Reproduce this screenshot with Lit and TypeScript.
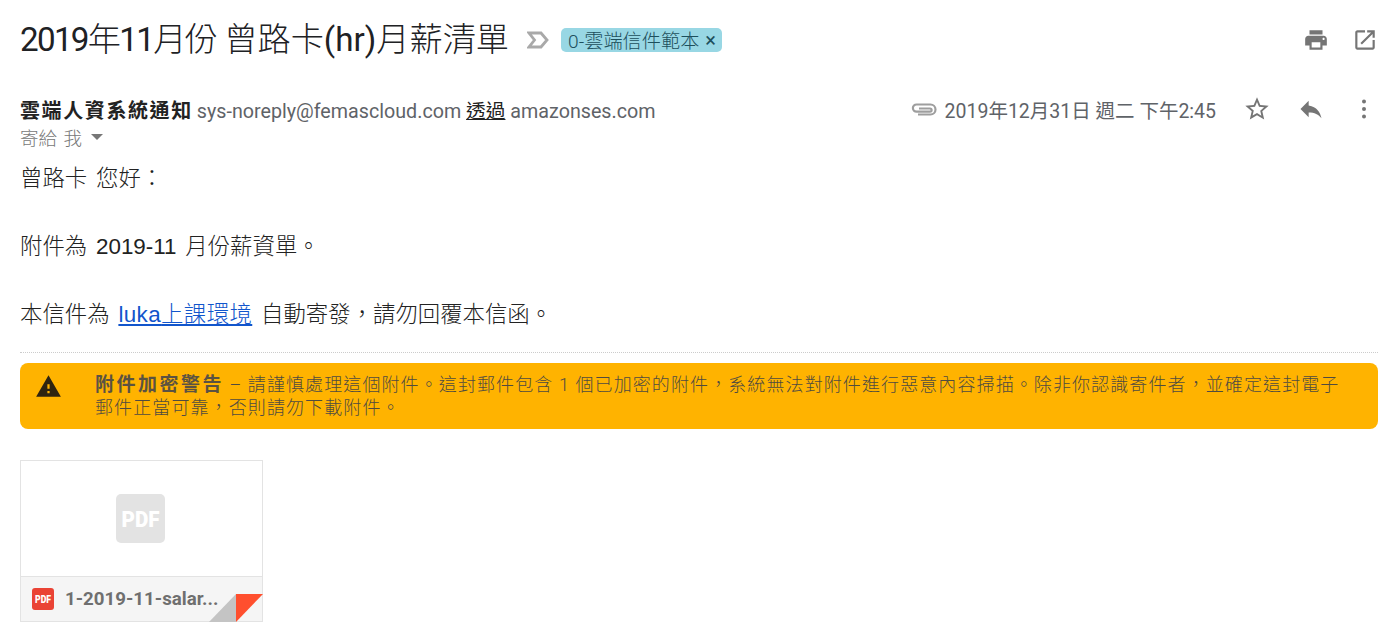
import { LitElement, html, css } from "lit";
import { customElement } from "lit/decorators.js";

@customElement("app-root")
export class AppRoot extends LitElement {
  static styles = css`
    :host {
      display: block;
      width: 1391px;
      height: 640px;
      overflow: hidden;
      background: #fff;
      font-family: Roboto, "Noto Sans CJK TC", sans-serif;
      color: #222;
      box-sizing: border-box;
      padding: 0 13px 0 20px;
    }
    svg { display: block; flex: none; }
    .lat { font-weight: 400; }
    .subject {
      display: flex;
      align-items: center;
      height: 80px;
    }
    .title { font-size: 33.2px; line-height: 40px; color: #202124; white-space: nowrap; font-weight: 300; }
    .title .tight { letter-spacing: -1.7px; }
    .imp { margin-left: 18px; }
    .tag {
      margin-left: 12px;
      display: flex;
      align-items: center;
      height: 24px;
      padding: 0 6px 0 7px;
      border-radius: 5px;
      background: #98d7e4;
      color: #1d4f5c;
      font-size: 19.2px;
      font-weight: 300;
      white-space: nowrap;
    }
    .tag .x { margin-left: 6px; font-size: 20px; line-height: 24px; font-weight: 400; }
    .grow { flex: 1; }
    .top-actions { display: flex; gap: 23px; align-items: center; }
    .from {
      display: flex;
      align-items: center;
      height: 34px;
      margin-top: 12px;
      white-space: nowrap;
    }
    .sender { font-size: 20px; font-weight: 700; color: #222; letter-spacing: 1.6px; }
    .addr { font-size: 19.7px; color: #5f6368; margin-left: 4px; }
    .addr u { color: #222; }
    .meta { display: flex; align-items: center; }
    .date { font-size: 19.5px; color: #5f6368; margin-left: 8px; }
    .msg-actions { display: flex; align-items: center; gap: 26.5px; margin-left: 26.5px; margin-right: 12px; }
    .dots { margin-left: 10.5px; }
    .to {
      display: flex;
      align-items: center;
      height: 20px;
      font-size: 18.5px;
      color: #777;
      white-space: nowrap;
      margin-top: 1px;
      font-weight: 300;
      word-spacing: 2px;
    }
    .caret {
      margin-left: 9px;
      width: 0;
      height: 0;
      border-left: 6px solid transparent;
      border-right: 6px solid transparent;
      border-top: 6px solid #777;
    }
    .body {
      margin-top: 15px;
      font-family: "Liberation Sans", "Noto Sans CJK TC", sans-serif;
      font-size: 22.4px;
      line-height: 34px;
      color: #222;
      font-weight: 300;
      word-spacing: 2.6px;
    }
    .body p { margin: 0; min-height: 34px; }
    .body a { color: #1155cc; text-decoration: underline; letter-spacing: 0.4px; }
    .rule {
      margin-top: 20px;
      border-top: 1px dotted #ccc;
    }
    .warn {
      margin-top: 10px;
      height: 66px;
      box-sizing: border-box;
      background: #ffb300;
      border-radius: 8px;
      display: flex;
      padding: 10px 30px 0 15px;
      color: #4f4b40;
      font-size: 18px;
      line-height: 23px;
    }
    .warn .ico { margin-right: 33px; }
    .warn b { font-size: 19px; color: #5b5242; letter-spacing: 2.5px; font-weight: 700; }
    .warn .txt { letter-spacing: 1.1px; font-weight: 300; }
    .att {
      margin-top: 31px;
      width: 243px;
      height: 162px;
      box-sizing: border-box;
      border: 1px solid #e3e3e3;
      position: relative;
      display: flex;
      flex-direction: column;
    }
    .preview {
      flex: 1;
      display: flex;
      align-items: center;
      justify-content: center;
      padding-right: 2px;
    }
    .bar {
      height: 45px;
      flex: none;
      box-sizing: border-box;
      background: #f5f5f5;
      border-top: 1px solid #e3e3e3;
      display: flex;
      align-items: center;
      padding: 0 0 0 11px;
    }
    .fname {
      margin-left: 11px;
      font-size: 18.7px;
      font-weight: 700;
      color: #6f6f6f;
      white-space: nowrap;
    }
    .fold { position: absolute; right: -1px; bottom: -1px; }
  `;

  render() {
    return html`
      <div class="subject">
        <div class="title"><span class="tight"><span class="lat">2019</span>年<span class="lat">11</span>月份</span> 曾路卡<span class="lat">(hr)</span>月薪清單</div>
        <svg class="imp" width="22" height="18" viewBox="0 0 22 18">
          <path d="M2 2h12l6 7-6 7H2l5.500-7z" fill="none" stroke="#a9a9a9" stroke-width="2.800"/>
        </svg>
        <div class="tag">0-雲端信件範本<span class="x">×</span></div>
        <div class="grow"></div>
        <div class="top-actions">
          <svg width="26" height="26" viewBox="0 0 24 24" fill="#757575"><path d="M19 8H5c-1.660 0-3 1.340-3 3v6h4v4h12v-4h4v-6c0-1.660-1.340-3-3-3zm-3 11H8v-5h8v5zm3-7c-.55 0-1-.45-1-1s.45-1 1-1 1 .45 1 1-.45 1-1 1zm-1-9H6v4h12V3z"/></svg>
          <svg width="26" height="26" viewBox="0 0 24 24" fill="#757575"><path d="M19 19H5V5h7V3H5c-1.110 0-2 .9-2 2v14c0 1.100.89 2 2 2h14c1.100 0 2-.9 2-2v-7h-2v7zM14 3v2h3.590l-9.830 9.830 1.410 1.410L19 6.410V10h2V3h-7z"/></svg>
        </div>
      </div>
      <div class="from">
        <span class="sender">雲端人資系統通知</span>
        <span class="addr">sys-noreply@femascloud.com <u>透過</u> amazonses.com</span>
        <div class="grow"></div>
        <div class="meta">
          <svg width="26" height="14" viewBox="0 0 26 14"><path d="M7 12.500h12.500a5 5 0 0 0 0-10H5.500a3.600 3.600 0 0 0 0 7.200H19a1.600 1.600 0 0 0 0-3.200H8" fill="none" stroke="#9e9e9e" stroke-width="2.200"/></svg>
          <span class="date">2019年12月31日 週二 下午2:45</span>
        </div>
        <div class="msg-actions">
          <svg width="28" height="28" viewBox="0 0 24 24" fill="#757575"><path d="M22 9.240l-7.190-.62L12 2 9.190 8.630 2 9.240l5.460 4.730L5.820 21 12 17.270 18.180 21l-1.630-7.030L22 9.240zM12 15.400l-3.760 2.270 1-4.280-3.320-2.880 4.380-.38L12 6.100l1.710 4.040 4.380.38-3.320 2.880 1 4.280L12 15.400z"/></svg>
          <svg width="28" height="28" viewBox="0 0 24 24" fill="#757575"><path d="M10 9V5l-7 7 7 7v-4.100c5 0 8.500 1.600 11 5.100-1-5-4-10-11-11z"/></svg>
          <svg class="dots" width="4" height="20" viewBox="0 0 4 20" fill="#757575"><circle cx="2" cy="2.500" r="2"/><circle cx="2" cy="10" r="2"/><circle cx="2" cy="17.500" r="2"/></svg>
        </div>
      </div>
      <div class="to">寄給 我<span class="caret"></span></div>
      <div class="body">
        <p>曾路卡 您好：</p>
        <p></p>
        <p>附件為 <span class="lat">2019-11</span> 月份薪資單。</p>
        <p></p>
        <p>本信件為 <a href="#"><span class="lat">luka</span>上課環境</a> 自動寄發，請勿回覆本信函。</p>
      </div>
      <div class="rule"></div>
      <div class="warn">
        <svg class="ico" width="27" height="27" viewBox="0 0 24 24" fill="#2f2410"><path d="M1 21h22L12 2 1 21zm12-3h-2v-2h2v2zm0-4h-2v-4h2v4z"/></svg>
        <div class="txt">
          <div><b>附件加密警告</b> – 請謹慎處理這個附件。這封郵件包含 1 個已加密的附件，系統無法對附件進行惡意內容掃描。除非你認識寄件者，並確定這封電子</div>
          <div>郵件正當可靠，否則請勿下載附件。</div>
        </div>
      </div>
      <div class="att">
        <div class="preview">
          <svg width="49" height="49" viewBox="0 0 49 49">
            <rect width="49" height="49" rx="5" fill="#e3e3e3"/>
            <text x="5.500" y="32.500" textLength="38" lengthAdjust="spacingAndGlyphs" font-family="Roboto, sans-serif" font-weight="900" font-size="22" fill="#fff">PDF</text>
          </svg>
        </div>
        <div class="bar">
          <svg width="22" height="22" viewBox="0 0 22 22">
            <rect width="22" height="22" rx="3" fill="#ea4335"/>
            <text x="3" y="15" textLength="16" lengthAdjust="spacingAndGlyphs" font-family="Roboto, sans-serif" font-weight="900" font-size="10" fill="#fff">PDF</text>
          </svg>
          <span class="fname">1-2019-11-salar...</span>
        </div>
        <svg class="fold" width="54" height="28" viewBox="0 0 54 28">
          <path d="M0 28 27 0v28z" fill="#c4c4c4"/>
          <path d="M27 0h27L27 28z" fill="#ff4f2e"/>
        </svg>
      </div>
    `;
  }
}
